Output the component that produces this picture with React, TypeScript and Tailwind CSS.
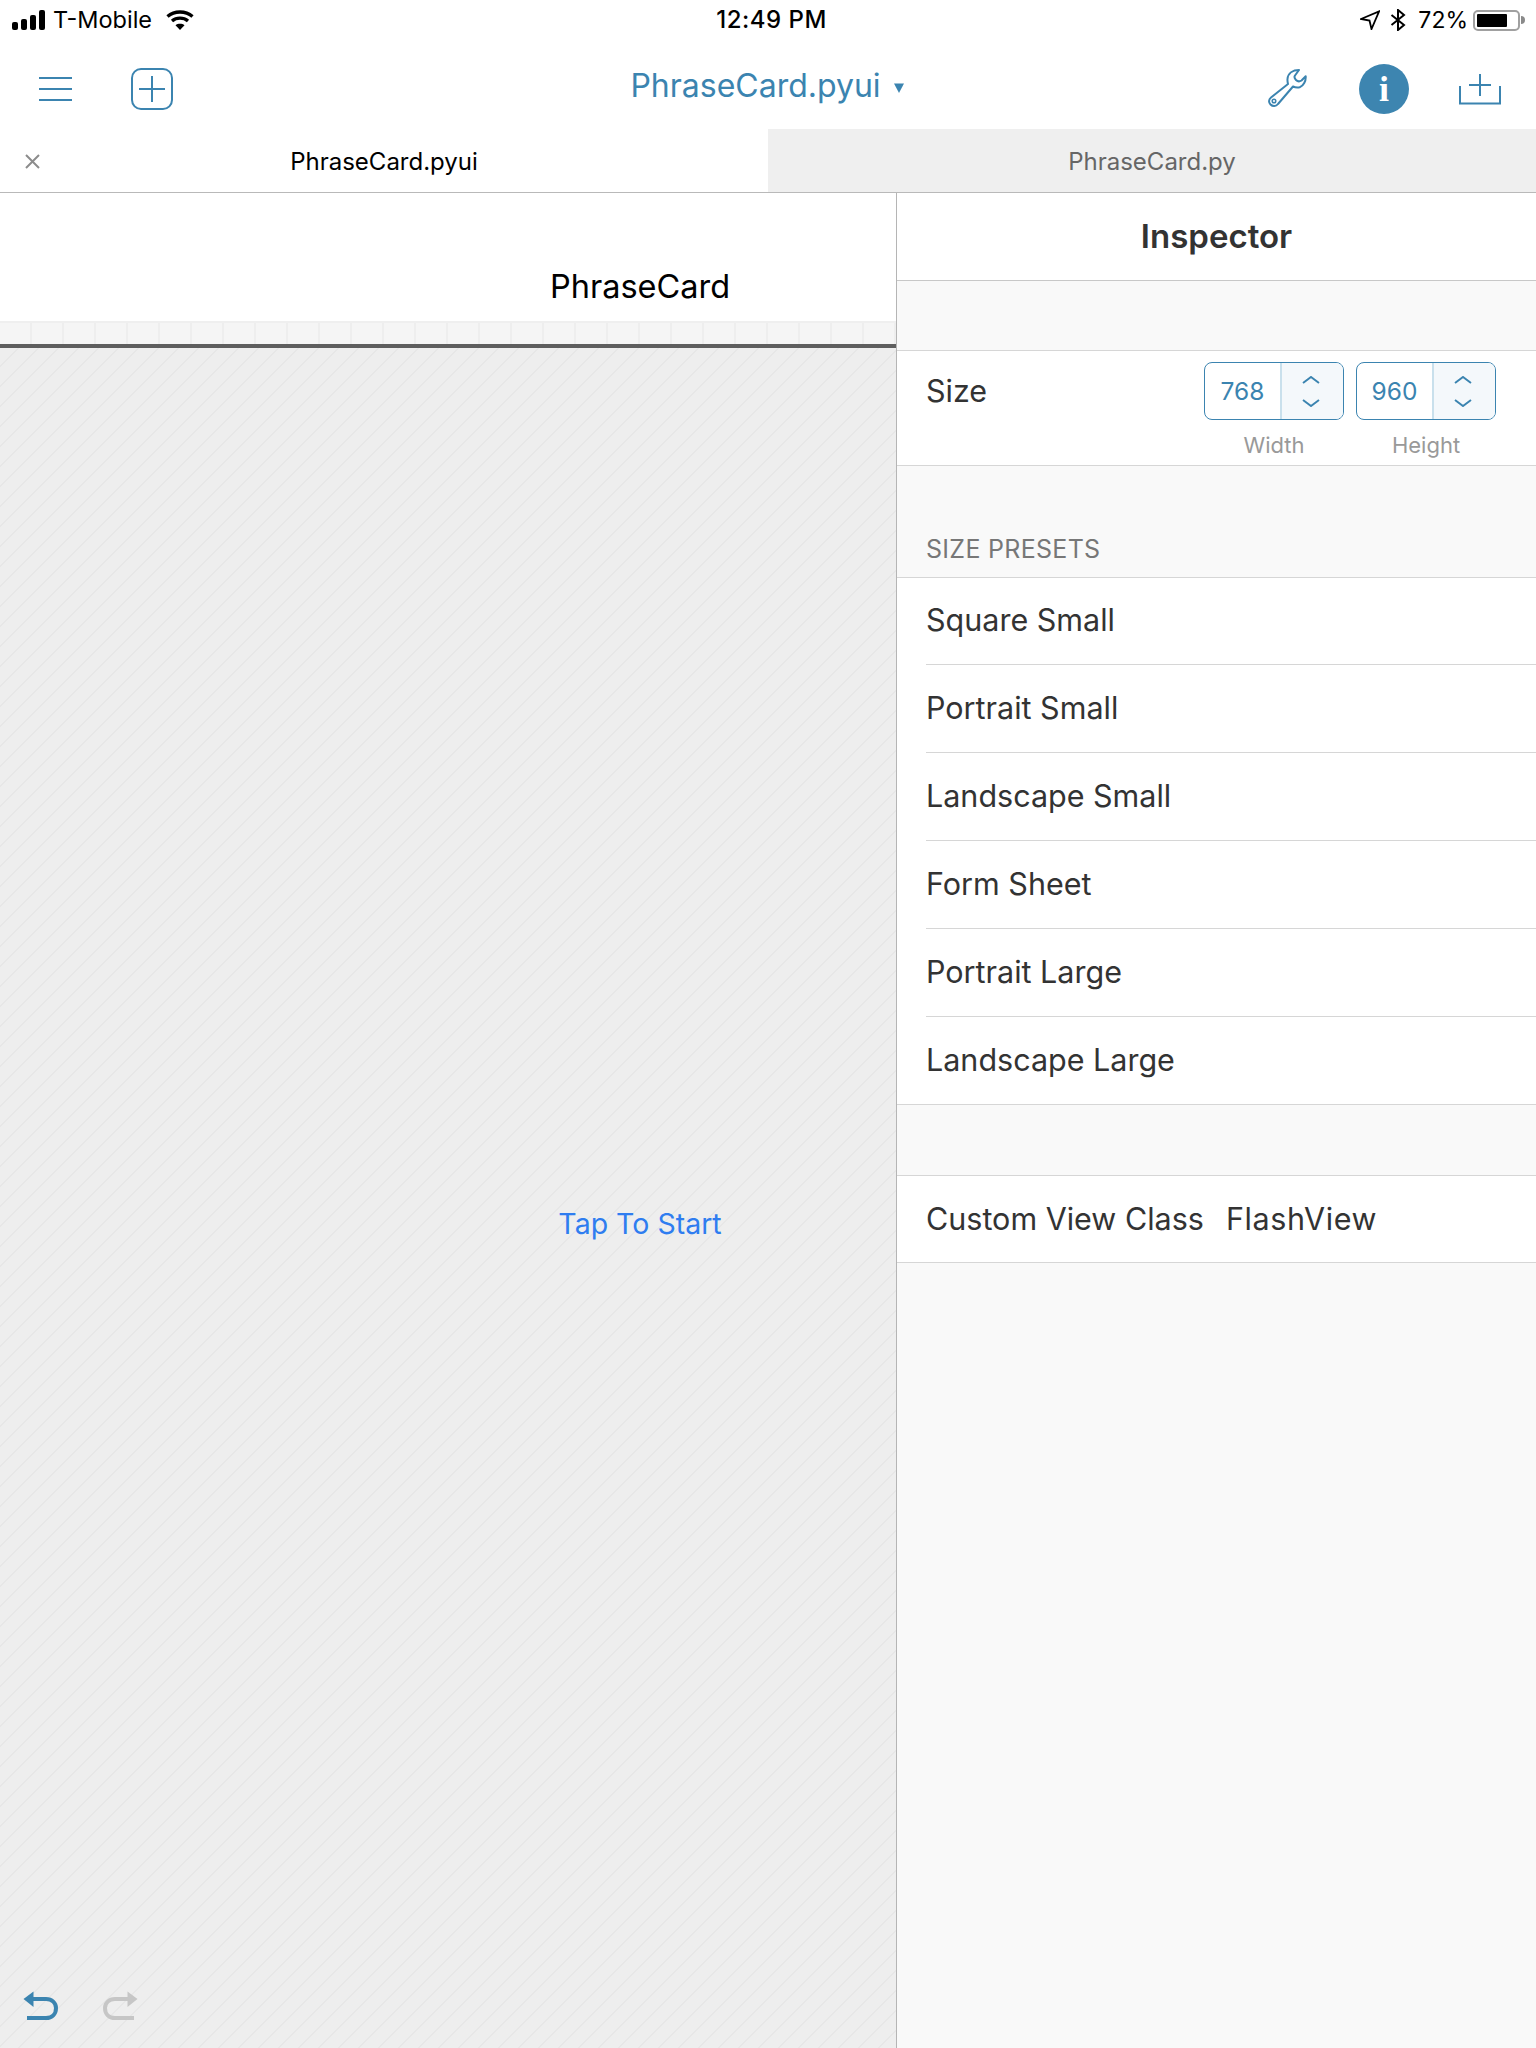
import React from 'react';

const presets = ['Square Small', 'Portrait Small', 'Landscape Small', 'Form Sheet', 'Portrait Large', 'Landscape Large'];

const StatusBar = () => (
  <div className="grid grid-cols-3 items-center h-10 pl-3 pr-[11px] text-black text-[23px]">
    <div className="flex items-center">
      <svg width="33" height="20" viewBox="0 0 33 20" fill="currentColor">
        <rect x="0" y="12" width="6" height="8" rx="2" />
        <rect x="9" y="9" width="6" height="11" rx="2" />
        <rect x="18" y="5" width="6" height="15" rx="2" />
        <rect x="27" y="0" width="6" height="20" rx="2" />
      </svg>
      <span className="ml-2 text-[23.5px]">T-Mobile</span>
      <svg className="ml-[14px]" width="28" height="20" viewBox="0 0 28 20" fill="none" stroke="currentColor" strokeWidth="3.4">
        <path d="M1.5 6.5C8.5 0.5 19.5 0.5 26.5 6.5" />
        <path d="M6 11C10.5 7.2 17.5 7.2 22 11" />
        <path d="M14 20L9.5 15.2C12 13.4 16 13.4 18.5 15.2Z" fill="currentColor" stroke="none" />
      </svg>
    </div>
    <div className="text-center font-medium text-[24px] tracking-[0.5px] pl-[6px]">12:49 PM</div>
    <div className="flex items-center justify-end">
      <svg width="20" height="20" viewBox="0 0 20 20" fill="none" stroke="currentColor" strokeWidth="1.8" strokeLinejoin="miter">
        <path d="M1 9L19 1.5L11.5 19L9.5 10.5Z" />
      </svg>
      <svg className="ml-[10px]" width="16" height="22" viewBox="0 0 16 22" fill="none" stroke="currentColor" strokeWidth="2">
        <path d="M1.5 6L14 16L8 21V1L14 6L1.5 16" />
      </svg>
      <span className="ml-[12px]">72%</span>
      <div className="ml-[5px] flex items-center">
        <div className="w-[47px] h-[21px] rounded-[5px] border-2 border-[#a0a0a0] p-[2px]">
          <div className="h-full w-[30px] bg-black rounded-[1px]" />
        </div>
        <div className="w-[4px] h-[8px] bg-[#8a8a8a] rounded-r-sm ml-[1px]" />
      </div>
    </div>
  </div>
);

const NavBar = () => (
  <div className="grid grid-cols-3 items-center h-[89px] pt-2 text-[#3b84b0]">
    <div className="flex items-center pl-[39px] gap-[59px]">
      <div className="flex flex-col gap-[9px] w-[33px]">
        <div className="h-[2px] bg-[#3b84b0]" />
        <div className="h-[2px] bg-[#3b84b0]" />
        <div className="h-[2px] bg-[#3b84b0]" />
      </div>
      <svg width="42" height="42" viewBox="0 0 42 42" fill="none" stroke="currentColor" strokeWidth="2">
        <rect x="1" y="1" width="40" height="40" rx="9" />
        <path d="M21 8V34M8 21H34" />
      </svg>
    </div>
    <div className="flex items-center justify-center text-[32px] -mt-[6px] -ml-[2px]">
      <span>PhraseCard.pyui</span>
      <svg className="ml-[13px] mt-1" width="10" height="10" viewBox="0 0 10 10" fill="currentColor">
        <path d="M0 0.5H10L5 10Z" />
      </svg>
    </div>
    <div className="flex items-center justify-end pr-[35px]">
      <svg width="40" height="40" viewBox="0 0 40 40" fill="none" stroke="currentColor" strokeWidth="2" strokeLinejoin="round">
        <path d="M31 1C25 1 20 4 19.5 10C19.3 12 19.5 13 20 15L3 28.5C0.5 30.5 0.5 33.5 2.5 35.5C4.5 37.5 8 37.5 10 35L25 17.5C27 18.5 29 18.8 31.7 18.3C35.5 17 38 12 37.7 7.3L33.5 11.5C32 12.5 29.5 12.5 28 11C26.5 9.5 26 8 27 6.5Z" />
        <circle cx="6" cy="32" r="1.8" strokeWidth="1.5" />
      </svg>
      <div className="ml-[51px] w-[50px] h-[50px] rounded-full bg-[#3d85b0] flex items-center justify-center text-white font-bold text-[36px] leading-none font-['Liberation_Serif',serif]">
        i
      </div>
      <svg className="ml-[50px]" width="42" height="32" viewBox="0 0 42 32" fill="none" stroke="currentColor" strokeWidth="2">
        <path d="M1 13V30.5H41V13" />
        <path d="M21 1V23M10 12H32" />
      </svg>
    </div>
  </div>
);

const Tabs = () => (
  <div className="flex h-[64px] border-b border-[#b9b9b9] text-[24px]">
    <div className="relative w-[768px] flex items-center justify-center text-black pt-[3px]">
      <svg className="absolute left-[25px] top-[25px]" width="15" height="15" viewBox="0 0 15 15" stroke="#8c8c8c" strokeWidth="2">
        <path d="M1 1L14 14M14 1L1 14" />
      </svg>
      PhraseCard.pyui
    </div>
    <div className="flex-1 flex items-center justify-center bg-[#efefef] text-[#666666] pt-[3px]">PhraseCard.py</div>
  </div>
);

const Stepper = ({ value, label }: { value: number; label: string }) => (
  <div className="flex flex-col w-[140px]">
    <div className="flex h-[58px] rounded-[8px] border border-[#3b84b0] overflow-hidden">
      <div className="w-[75px] flex items-center justify-center text-[24.5px] text-[#3b84b0]">{value}</div>
      <div className="flex-1 border-l-2 border-[#c9e0ec] bg-[#f4f8fb] flex flex-col items-center justify-center gap-[15px] pr-[3px]">
        <svg width="18" height="8" viewBox="0 0 18 8" fill="none" stroke="#3b84b0" strokeWidth="2">
          <path d="M1 7L9 1L17 7" />
        </svg>
        <svg width="18" height="8" viewBox="0 0 18 8" fill="none" stroke="#3b84b0" strokeWidth="2">
          <path d="M1 1L9 7L17 1" />
        </svg>
      </div>
    </div>
    <div className="text-[22px] text-[#999999] text-center mt-[9px]">{label}</div>
  </div>
);

const Inspector = () => (
  <div className="flex-1 bg-[#f9f9f9] text-[#333333] text-[30.5px]">
    <div className="h-[88px] bg-white border-b border-[#c8c8c8] flex items-center justify-center font-semibold text-[33px]">
      Inspector
    </div>
    <div className="mt-[69px] h-[116px] bg-white border-y border-[#d6d6d6] flex justify-between pl-[29px] pr-[40px] pt-[11px]">
      <div className="mt-[6px]">Size</div>
      <div className="flex gap-[12px]">
        <Stepper value={768} label="Width" />
        <Stepper value={960} label="Height" />
      </div>
    </div>
    <div className="mt-[67px] pl-[29px] text-[25px] text-[#777777] leading-[32px] mb-[12px] tracking-[0.3px]">SIZE PRESETS</div>
    <div className="bg-white border-y border-[#d6d6d6] pl-[29px]">
      {presets.map((p, i) => (
        <div
          key={p}
          className={`flex items-center pb-[2px] ${i < presets.length - 1 ? 'border-b border-[#d6d6d6]' : ''} ${i === 0 || i === presets.length - 1 ? 'h-[87px]' : 'h-[88px]'}`}
        >
          {p}
        </div>
      ))}
    </div>
    <div className="mt-[70px] h-[88px] bg-white border-y border-[#d6d6d6] pl-[29px] flex items-center">
      <span className="w-[300px]">Custom View Class</span>
      <span className="tracking-[0.6px]">FlashView</span>
    </div>
  </div>
);

const Canvas = () => (
  <div className="w-[897px] border-r border-[#b5b5b5] flex flex-col">
    <div className="h-[128px] pl-[384px] flex items-end justify-center text-[32.5px] text-black pb-[9px]">
      <span>PhraseCard</span>
    </div>
    <div className="h-[23px] bg-[#f5f5f5] border-t-2 border-[#efefef] bg-[repeating-linear-gradient(90deg,#f5f5f5_0px,#f5f5f5_30px,#eeeeee_30px,#eeeeee_32px)]" />
    <div className="h-[4px] bg-[#5e5e5e]" />
    <div className="flex-1 flex flex-col bg-[#eeeeee] bg-[repeating-linear-gradient(135deg,#eeeeee_0px,#eeeeee_12.3px,#e7e7e7_12.3px,#e7e7e7_14.14px)]">
      <div className="pl-[384px] mt-[856px] text-center text-[28.5px] text-[#2f7df0] leading-[40px]">Tap To Start</div>
      <div className="mt-auto pl-[23px] pb-[26px] flex gap-[43px] items-end">
        <svg width="36" height="31" viewBox="0 0 36 31" fill="none" strokeWidth="4" stroke="#3b84b0">
          <path d="M9 8H23C29 8 33 12 33 17C33 23 29 27 23 27H4" />
          <path d="M0.5 8L10.5 0.5V16Z" fill="#3b84b0" stroke="none" />
        </svg>
        <svg width="36" height="31" viewBox="0 0 36 31" fill="none" strokeWidth="4" stroke="#c6c6c6">
          <path d="M27 8H13C7 8 3 12 3 17C3 23 7 27 13 27H32" />
          <path d="M35.5 8L25.5 0.5V16Z" fill="#c6c6c6" stroke="none" />
        </svg>
      </div>
    </div>
  </div>
);

export default function App() {
  return (
    <div className="flex flex-col h-[2048px] bg-white overflow-hidden font-['Inter',sans-serif]">
      <StatusBar />
      <NavBar />
      <Tabs />
      <div className="flex flex-1">
        <Canvas />
        <Inspector />
      </div>
    </div>
  );
}
